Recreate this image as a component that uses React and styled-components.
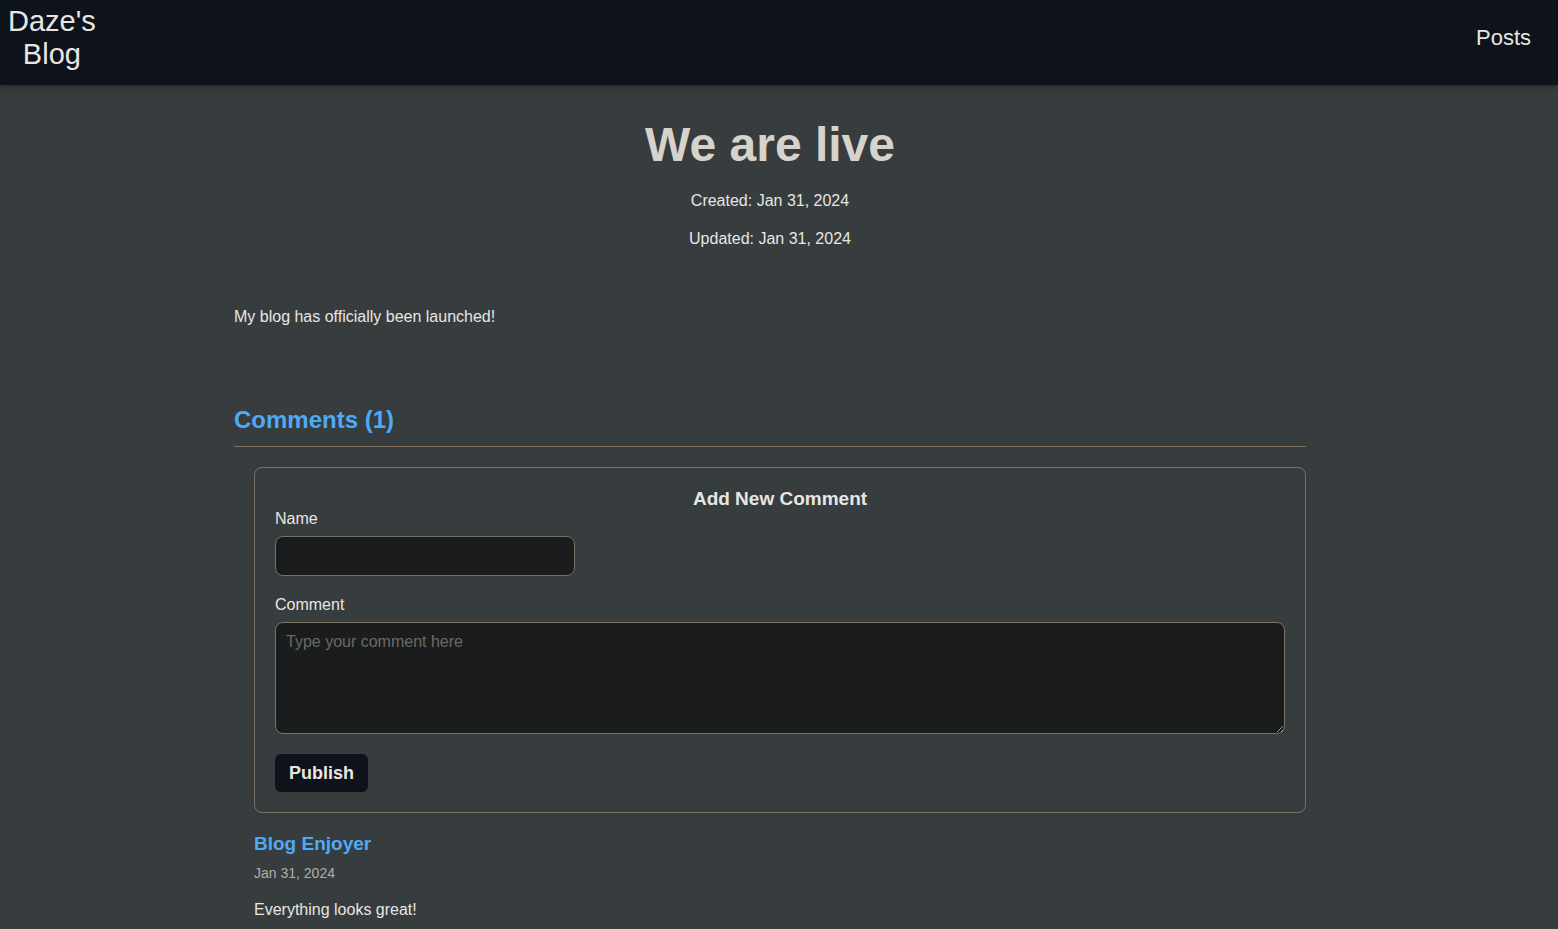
import styled, { createGlobalStyle } from "styled-components";

const GlobalStyle = createGlobalStyle`
  html, body {
    margin: 0;
    padding: 0;
    background: #373c3f;
    color: #e8e6e3;
    font-family: "Liberation Sans", Arial, sans-serif;
  }
`;

const Navbar = styled.header`
  height: 85px;
  background: #0e121a;
  display: flex;
  align-items: center;
  justify-content: space-between;
  padding: 0 27px 0 8px;
  box-shadow: 0 2px 6px rgba(0, 0, 0, 0.35);
`;

const Brand = styled.a`
  font-size: 29px;
  line-height: 33px;
  text-align: center;
  color: #e8e6e3;
  text-decoration: none;
  margin-top: -9px;
`;

const NavLink = styled.a`
  font-size: 22px;
  color: #e8e6e3;
  text-decoration: none;
  margin-top: -10px;
`;

const Main = styled.main`
  width: 1072px;
  margin-left: 234px;
  padding-top: 32px;
`;

const Title = styled.h1`
  font-size: 48px;
  font-weight: bold;
  color: #d6d2cc;
  text-align: center;
  margin: 0 0 20px;
  line-height: 55px;
`;

const Meta = styled.p`
  font-size: 16px;
  text-align: center;
  margin: 0 0 20px;
  line-height: 18px;
`;

const Body = styled.p`
  font-size: 16px;
  margin: 60px 0 0;
  line-height: 18px;
`;

const CommentsHeader = styled.h2`
  font-size: 24px;
  font-weight: bold;
  color: #4eaaf5;
  margin: 80px 0 0;
  padding-bottom: 12px;
  border-bottom: 1px solid #7d7060;
  line-height: 28px;
`;

const CommentsArea = styled.section`
  padding-left: 20px;
`;

const FormCard = styled.form`
  margin-top: 20px;
  border: 1px solid #7a7264;
  border-radius: 8px;
  padding: 20px;
`;

const FormTitle = styled.h3`
  font-size: 19px;
  font-weight: bold;
  text-align: center;
  margin: 0;
  line-height: 22px;
`;

const Label = styled.label`
  display: block;
  font-size: 16px;
  line-height: 18px;
  margin-bottom: 8px;
`;

const Field = styled.div`
  margin-bottom: ${(p) => p.$gap}px;
`;

const Input = styled.input`
  box-sizing: border-box;
  display: block;
  width: 300px;
  height: 40px;
  background: #1b1c1e;
  border: 1px solid #7a7264;
  border-radius: 8px;
  color: #e8e6e3;
  font-family: inherit;
  font-size: 16px;
  padding: 0 10px;
`;

const TextArea = styled.textarea`
  box-sizing: border-box;
  display: block;
  width: 100%;
  height: 112px;
  background: #1b1c1e;
  border: 1px solid #7a7264;
  border-radius: 8px;
  color: #e8e6e3;
  font-family: inherit;
  font-size: 16px;
  padding: 10px 10px;
  &::placeholder {
    color: #6b6a66;
  }
`;

const Button = styled.button`
  background: #0e121a;
  color: #e8e6e3;
  border: none;
  border-radius: 6px;
  font-family: inherit;
  font-size: 18px;
  font-weight: bold;
  height: 38px;
  padding: 0 12px;
  width: 93px;
`;

const Comment = styled.article`
  margin-top: 20px;
`;

const Author = styled.h4`
  font-size: 19px;
  font-weight: bold;
  color: #4eaaf5;
  margin: 0;
  line-height: 22px;
`;

const CommentDate = styled.div`
  font-size: 14px;
  color: #b5aea4;
  margin-top: 10px;
  line-height: 16px;
`;

const CommentText = styled.p`
  font-size: 16px;
  margin: 20px 0 0;
  line-height: 18px;
`;

export default function App() {
  return (
    <>
      <GlobalStyle />
      <Navbar>
        <Brand href="#">
          Daze's
          <br />
          Blog
        </Brand>
        <NavLink href="#">Posts</NavLink>
      </Navbar>
      <Main>
        <Title>We are live</Title>
        <Meta>Created: Jan 31, 2024</Meta>
        <Meta>Updated: Jan 31, 2024</Meta>
        <Body>My blog has officially been launched!</Body>
        <CommentsHeader>Comments (1)</CommentsHeader>
        <CommentsArea>
          <FormCard onSubmit={(e) => e.preventDefault()}>
            <FormTitle>Add New Comment</FormTitle>
            <Field $gap={20}>
              <Label>Name</Label>
              <Input type="text" />
            </Field>
            <Field $gap={20}>
              <Label>Comment</Label>
              <TextArea placeholder="Type your comment here" />
            </Field>
            <Button type="submit">Publish</Button>
          </FormCard>
          <Comment>
            <Author>Blog Enjoyer</Author>
            <CommentDate>Jan 31, 2024</CommentDate>
            <CommentText>Everything looks great!</CommentText>
          </Comment>
        </CommentsArea>
      </Main>
    </>
  );
}
